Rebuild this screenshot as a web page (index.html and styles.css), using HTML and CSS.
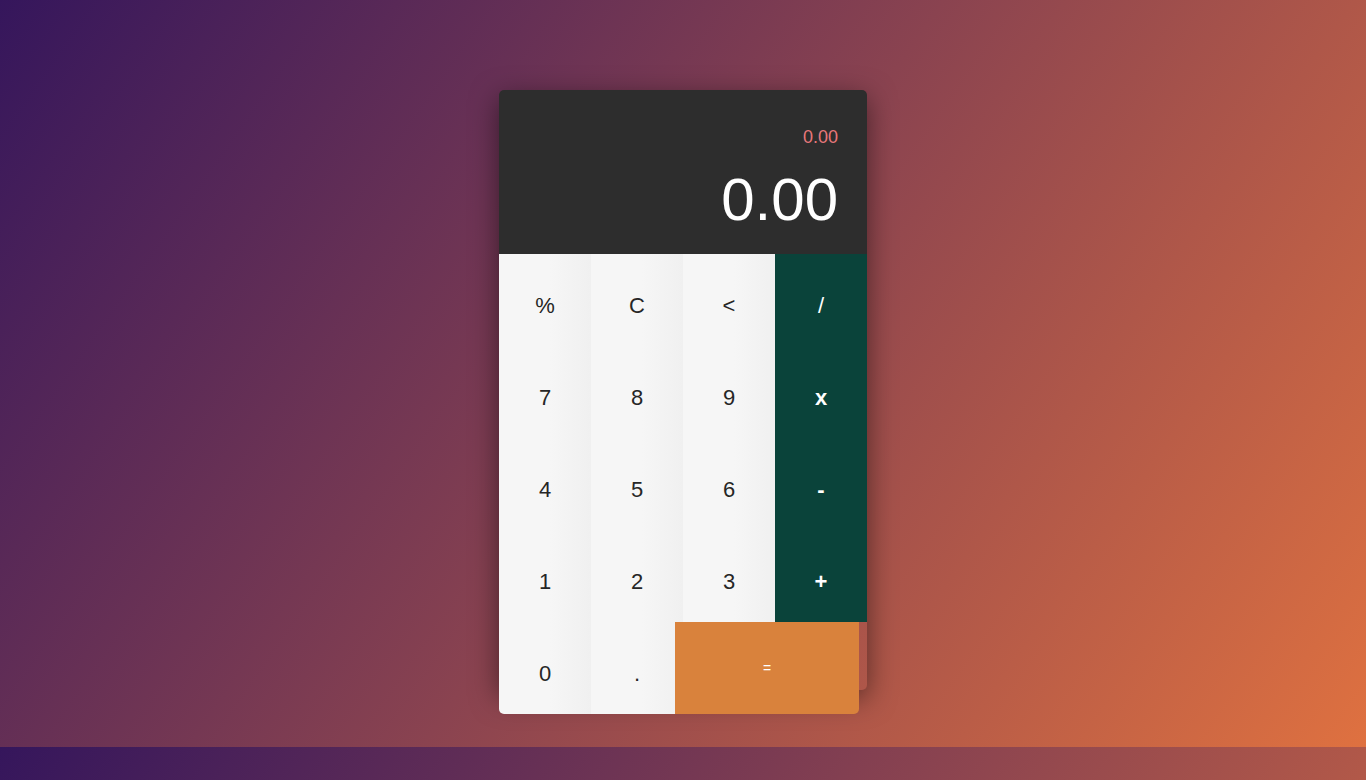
FILE: index.html
```html
<!DOCTYPE html>
<html lang="en">
<head>
<meta charset="utf-8">
<title>Calculator</title>
<link rel="stylesheet" href="styles.css">
</head>
<body>
<div class="calculator">
  <div class="display">
    <div class="history">0.00</div>
    <div class="current">0.00</div>
  </div>
  <div class="keys">
    <div class="key">%</div>
    <div class="key">C</div>
    <div class="key">&lt;</div>
    <div class="key op op-thin">/</div>
    <div class="key">7</div>
    <div class="key">8</div>
    <div class="key">9</div>
    <div class="key op">x</div>
    <div class="key">4</div>
    <div class="key">5</div>
    <div class="key">6</div>
    <div class="key op">-</div>
    <div class="key">1</div>
    <div class="key">2</div>
    <div class="key">3</div>
    <div class="key op">+</div>
    <div class="key key-zero">0</div>
    <div class="key">.</div>
    <div class="key key-equals">=</div>
  </div>
</div>
</body>
</html>
```

FILE: styles.css
```css
html {
  background: linear-gradient(125deg, #35165c, #8a4350 50%, #df7140);
  background-size: 100% 747px;
  background-repeat: repeat;
}

body {
  margin: 0;
  height: 100vh;
  display: flex;
  align-items: center;
  justify-content: center;
  font-family: "Liberation Sans", Arial, sans-serif;
}

.calculator {
  width: 368px;
  height: 600px;
  border-radius: 5px;
  box-shadow: 0 8px 28px rgba(0, 0, 0, 0.5);
  display: flex;
  flex-direction: column;
}

.display {
  height: 164px;
  flex: none;
  background: #2d2d2d;
  border-radius: 5px 5px 0 0;
  box-sizing: border-box;
  padding: 36px 29px 0 0;
  text-align: right;
}

.history {
  color: #e8777a;
  font-size: 18px;
  line-height: 22px;
}

.current {
  color: #ffffff;
  font-size: 60px;
  line-height: 66px;
  margin-top: 19px;
}

.keys {
  display: grid;
  grid-template-columns: repeat(4, 92px);
  grid-auto-rows: 92px;
  flex: none;
}

.key {
  display: flex;
  align-items: center;
  justify-content: center;
  box-sizing: border-box;
  padding-top: 12px;
  font-size: 22px;
  color: #262626;
  background: linear-gradient(to right, #f6f6f6 55%, #f0f0f0);
}

.op {
  background: #0a433a;
  color: #ffffff;
  font-weight: bold;
}

.op-thin {
  font-weight: normal;
}

.key-zero {
  border-radius: 0 0 0 5px;
}

.key-equals {
  grid-column: 3 / 5;
  margin-left: -8px;
  margin-right: 8px;
  padding-top: 0;
  background: #d9823c;
  color: #ffffff;
  font-size: 14px;
  border-radius: 0 0 5px 0;
}
```
